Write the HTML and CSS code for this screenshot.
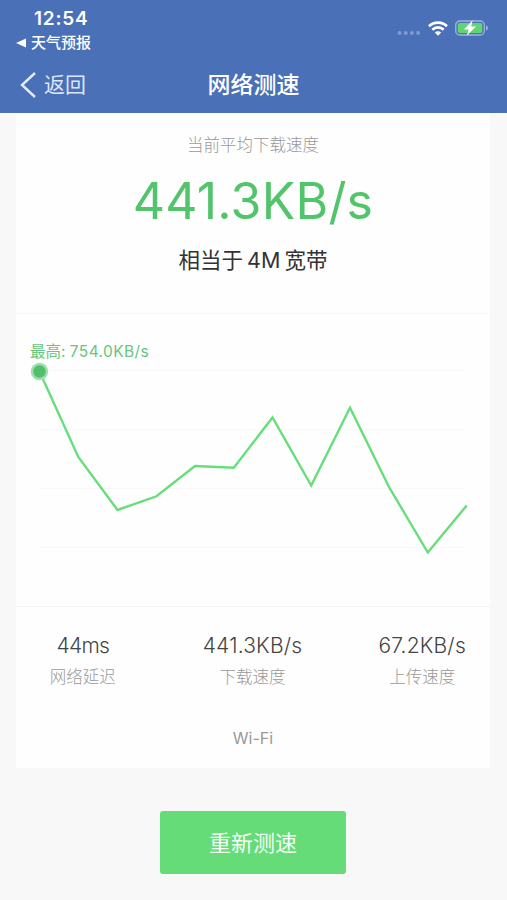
FILE: index.html
```html
<!DOCTYPE html>
<html lang="zh-CN">
<head>
    <meta charset="UTF-8">
    <meta name="viewport" content="width=device-width, initial-scale=1.0">
    <title>网络测速</title>
    <link rel="stylesheet" href="styles.css">
</head>
<body>
    <header class="header">
        <div class="status-bar">
            <div class="status-left">
                <div class="time">12:54</div>
                <div class="back-app">
                    <svg width="10" height="10" viewBox="0 0 10 10"><path d="M0 5 L10 0.5 V9.5 Z" fill="#fff"/></svg>
                    <span>天气预报</span>
                </div>
            </div>
            <div class="status-icons">
                <svg class="signal" width="24" height="6" viewBox="0 0 24 6">
                    <circle cx="2.5" cy="3" r="2"/>
                    <circle cx="8.7" cy="3" r="2"/>
                    <circle cx="14.9" cy="3" r="2"/>
                    <circle cx="21.1" cy="3" r="2"/>
                </svg>
                <svg class="wifi" width="20" height="15" viewBox="0 0 20 15">
                    <path d="M1 5.2 C6 0.4 14 0.4 19 5.2" />
                    <path d="M4.3 8.7 C7.5 5.7 12.5 5.7 15.7 8.7" />
                    <path class="wifi-dot" d="M6.8 11.6 C8.6 9.9 11.4 9.9 13.2 11.6 L10 14.8 Z" />
                </svg>
                <svg class="battery" width="34" height="16" viewBox="0 0 34 16">
                    <rect x="0.75" y="1" width="28.5" height="14" rx="4" fill="none" stroke="#9fb5dc" stroke-width="1.3"/>
                    <rect x="2.7" y="3" width="24.6" height="10" rx="2" fill="#62d471"/>
                    <path d="M31 5.5 C33.6 6 33.6 10 31 10.5 Z" fill="#9fb5dc"/>
                    <path d="M17.6 0.3 L9 9.4 H13.6 L11.8 15.7 L21 6.5 H16.2 Z" fill="#fff"/>
                </svg>
            </div>
        </div>
        <nav class="nav">
            <a class="back">
                <svg width="17" height="28" viewBox="0 0 17 28"><path d="M15 2 L2 14 L15 26" fill="none" stroke="#e3ebfa" stroke-width="2.4"/></svg>
                <span>返回</span>
            </a>
            <h1>网络测速</h1>
        </nav>
    </header>

    <main class="card">
        <section class="summary">
            <p class="summary-label">当前平均下载速度</p>
            <p class="speed">441.3KB/s</p>
            <p class="bandwidth">相当于<span>4M</span>宽带</p>
        </section>

        <section class="chart">
            <p class="chart-max">最高: <span>754.0KB/s</span></p>
            <svg width="474" height="244" viewBox="0 0 474 244">
                <g class="grid-lines">
                    <path d="M24 8.5 H450"/>
                    <path d="M24 67.5 H450"/>
                    <path d="M24 126.5 H450"/>
                    <path d="M24 185.5 H450"/>
                </g>
                <polyline class="line" points="23.5,9.5 62.3,95 101.5,148 140.5,134.3 179,104 217.8,105.7 256.5,55.5 295.2,123.5 334,45.7 373,125 411.8,190.5 450.7,143.5"/>
                <circle cx="23.5" cy="9.5" r="8.7" fill="#a0ddb2"/>
                <circle cx="23.5" cy="9.5" r="6.2" fill="#52bf6a"/>
            </svg>
        </section>

        <section class="stats">
            <div class="stat">
                <strong class="delay">44ms</strong>
                <span>网络延迟</span>
            </div>
            <div class="stat">
                <strong>441.3KB/s</strong>
                <span>下载速度</span>
            </div>
            <div class="stat">
                <strong>67.2KB/s</strong>
                <span>上传速度</span>
            </div>
        </section>
        <p class="network">Wi-Fi</p>
    </main>

    <button class="retry">重新测速</button>
</body>
</html>
```

FILE: styles.css
```css
* {
    box-sizing: border-box;
}

body {
    display: flex;
    flex-direction: column;
    height: 900px;
    margin: 0;
    background-color: #f8f8f8;
    font-family: Inter, "Noto Sans CJK SC", sans-serif;
    overflow: hidden;
}

p, h1 {
    margin: 0;
    font-weight: 400;
}

.header {
    height: 113px;
    background-color: #4a70b7;
    color: #fff;
}

.status-bar {
    display: flex;
    justify-content: space-between;
    height: 56px;
    padding: 8px 18px 0 16px;
}

.time {
    margin-left: 18px;
    font-size: 19px;
    font-weight: 600;
    line-height: 22px;
    letter-spacing: 0.8px;
}

.back-app {
    display: flex;
    align-items: center;
    gap: 5px;
    height: 26px;
    font-size: 15px;
    font-weight: 500;
}

.back-app span {
    padding-bottom: 3px;
}

.status-icons {
    display: flex;
    align-items: center;
    height: 40px;
}

.signal {
    margin: 10px 7px 0 0;
    fill: #7f9bcf;
}

.wifi {
    margin-right: 7px;
    fill: none;
    stroke: #fff;
    stroke-width: 2.7;
}

.wifi-dot {
    fill: #fff;
    stroke: none;
}

.nav {
    display: grid;
    grid-template-columns: 1fr auto 1fr;
    align-items: center;
    height: 57px;
    padding: 0 20px 0 20px;
}

.back {
    display: flex;
    align-items: center;
    gap: 7px;
    color: #dce6f8;
    font-size: 21px;
}

.back span {
    padding-bottom: 3px;
}

.nav h1 {
    padding-bottom: 4px;
    font-size: 23px;
    font-weight: 500;
}

.card {
    height: 655px;
    margin: 0 17px 0 16px;
    background-color: #fefefe;
}

.summary {
    height: 201px;
    padding-top: 20px;
    border-bottom: 1px solid #f6f6f6;
    text-align: center;
}

.summary-label {
    color: #999;
    font-size: 16.5px;
    font-weight: 300;
    line-height: 24px;
}

.speed {
    margin-top: 14px;
    color: #52c46b;
    font-size: 50px;
    line-height: 60px;
    letter-spacing: 0.2px;
}

.bandwidth {
    margin-top: 13px;
    color: #333;
    font-size: 21.5px;
    line-height: 32px;
}

.bandwidth span {
    margin: 0 4px;
}

.chart {
    height: 293px;
    padding-top: 28px;
    border-bottom: 1px solid #f3f3f3;
}

.chart-max {
    padding-left: 14px;
    color: #66c67c;
    font-size: 15.5px;
    line-height: 20px;
}

.chart-max span {
    letter-spacing: 0.4px;
}

.chart svg {
    display: block;
}

.grid-lines {
    stroke: #f8f8f8;
}

.line {
    fill: none;
    stroke: #68de7b;
    stroke-width: 2.4;
}

.stats {
    display: grid;
    grid-template-columns: repeat(3, 1fr);
    margin: 0 -17px 0 -18px;
    padding-top: 25px;
    text-align: center;
}

.stat strong {
    display: block;
    color: #444;
    font-size: 21px;
    font-weight: 300;
    line-height: 28px;
    letter-spacing: 0.2px;
}

.stat .delay {
    letter-spacing: -0.7px;
}

.stat span {
    display: block;
    margin-top: 5px;
    color: #999;
    font-size: 16.5px;
    font-weight: 300;
    line-height: 24px;
}

.network {
    margin-top: 37px;
    color: #999;
    font-size: 16px;
    line-height: 24px;
    text-align: center;
}

.retry {
    width: 186px;
    height: 63px;
    margin: 43px auto 0 160px;
    padding-bottom: 5px;
    border: none;
    border-radius: 3px;
    background-color: #65dc77;
    color: #f4fff5;
    font-family: inherit;
    font-size: 22px;
}
```
